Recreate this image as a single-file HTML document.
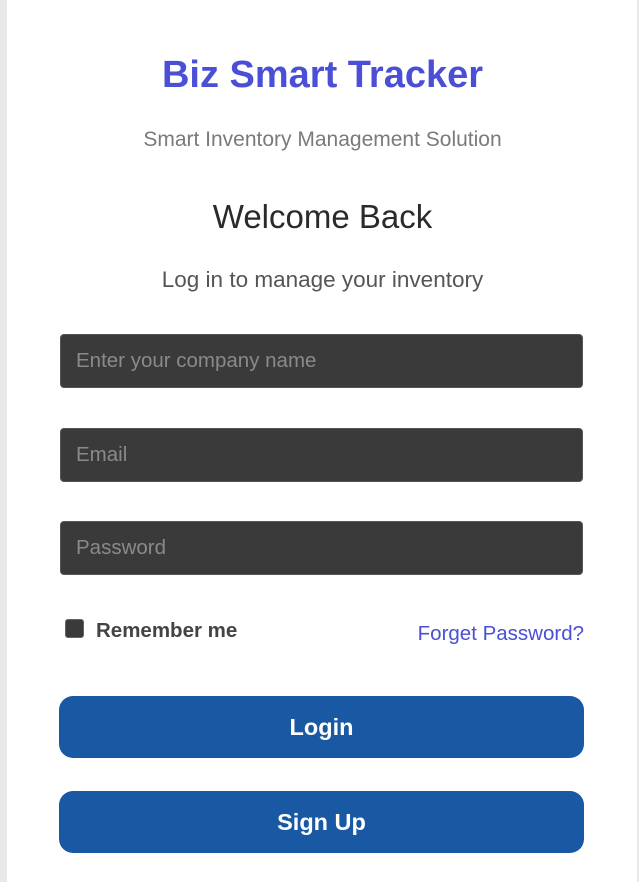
<!DOCTYPE html>
<html><head><style>
body{margin:0;width:639px;height:882px;background:#e8e8ea;position:relative;overflow:hidden;font-family:"Liberation Sans","DejaVu Sans",sans-serif}
.card{position:absolute;left:7px;top:0;width:630px;height:882px;background:#fff}
.t{position:absolute;left:0;width:645px;text-align:center;white-space:nowrap}
.in{position:absolute;left:60px;width:523px;height:54px;background:#3a3a3a;border:1px solid #555;border-radius:4px;box-sizing:border-box;color:#8a8a8a;font-size:20.5px;line-height:52px;padding-left:15px}
.btn{position:absolute;left:59px;width:525px;height:62px;background:#1958a3;border-radius:14px;color:#fff;font-weight:bold;font-size:23.5px;text-align:center;line-height:62px}
</style></head><body>
<div class="card"></div>
<div class="t" style="top:54px;font-size:38px;font-weight:bold;color:#4a4fd6">Biz Smart Tracker</div>
<div class="t" style="top:128px;font-size:21px;color:#7a7a7a">Smart Inventory Management Solution</div>
<div class="t" style="top:198px;font-size:33px;color:#2a2a2a">Welcome Back</div>
<div class="t" style="top:267px;font-size:22.5px;color:#555">Log in to manage your inventory</div>
<div class="in" style="top:334px">Enter your company name</div>
<div class="in" style="top:428px">Email</div>
<div class="in" style="top:521px">Password</div>
<div style="position:absolute;left:65px;top:619px;width:19px;height:19px;background:#3a3a3a;border:1px solid #666;border-radius:3px;box-sizing:border-box"></div>
<div style="position:absolute;left:96px;top:619px;font-size:20.5px;font-weight:bold;color:#444">Remember me</div>
<div style="position:absolute;right:55px;top:622px;font-size:20.5px;color:#4a4fd6">Forget Password?</div>
<div class="btn" style="top:696px">Login</div>
<div class="btn" style="top:791px">Sign Up</div>
</body></html>
